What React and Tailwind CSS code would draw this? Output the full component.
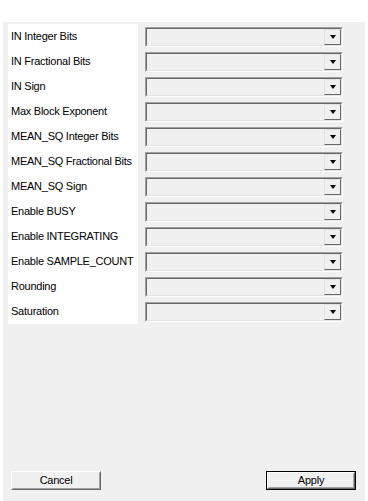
import React from 'react';

const labels = [
  'IN Integer Bits',
  'IN Fractional Bits',
  'IN Sign',
  'Max Block Exponent',
  'MEAN_SQ Integer Bits',
  'MEAN_SQ Fractional Bits',
  'MEAN_SQ Sign',
  'Enable BUSY',
  'Enable INTEGRATING',
  'Enable SAMPLE_COUNT',
  'Rounding',
  'Saturation',
];

// classic sunken combobox, disabled look
const Combo = () => (
  <div className="w-[198px] h-[20px] border border-t-[#a0a0a0] border-l-[#a0a0a0] border-b-white border-r-white">
    <div className="h-full flex border border-t-[#696969] border-l-[#696969] border-b-[#e3e3e3] border-r-[#e3e3e3] bg-[#f0f0f0]">
      <div className="flex-1" />
      <div className="w-[17px] h-full border border-t-[#e3e3e3] border-l-[#e3e3e3] border-b-[#696969] border-r-[#696969] bg-[#f0f0f0] flex items-center justify-center">
        <div className="w-0 h-0 border-l-[3.5px] border-r-[3.5px] border-t-[4px] border-l-transparent border-r-transparent border-t-black" />
      </div>
    </div>
  </div>
);

const Btn = ({ label, isDefault }) => (
  <div className={`w-[90px] h-[19px] ${isDefault ? 'border border-black' : ''}`}>
    <div className="h-full border border-t-white border-l-white border-b-[#696969] border-r-[#696969]">
      <div className="h-full flex items-center justify-center border border-t-[#f0f0f0] border-l-[#f0f0f0] border-b-[#a0a0a0] border-r-[#a0a0a0] bg-[#f0f0f0] text-black">
        {label}
      </div>
    </div>
  </div>
);

export default function App() {
  return (
    <div className="w-[368px] h-[501px] bg-white text-[11px] tracking-[-0.25px] text-black font-['Liberation_Sans',Arial,sans-serif] overflow-hidden">
      <div className="h-[22px]" />
      <div className="ml-[3px] w-[362px] h-[479px] bg-[#f0f0f0] flex flex-col">
        <div className="flex pt-[2px] pl-[5px]">
          <div className="w-[130px] bg-white">
            {labels.map((l) => (
              <div key={l} className="h-[25px] pl-[3px] flex items-center whitespace-nowrap">
                {l}
              </div>
            ))}
          </div>
          <div className="ml-[7px]">
            {labels.map((l) => (
              <div key={l} className="h-[25px] pt-[3px]">
                <Combo />
              </div>
            ))}
          </div>
        </div>
        <div className="mt-auto mb-[11px] flex justify-between pl-[8px] pr-[9px]">
          <Btn label="Cancel" />
          <Btn label="Apply" isDefault />
        </div>
      </div>
    </div>
  );
}
